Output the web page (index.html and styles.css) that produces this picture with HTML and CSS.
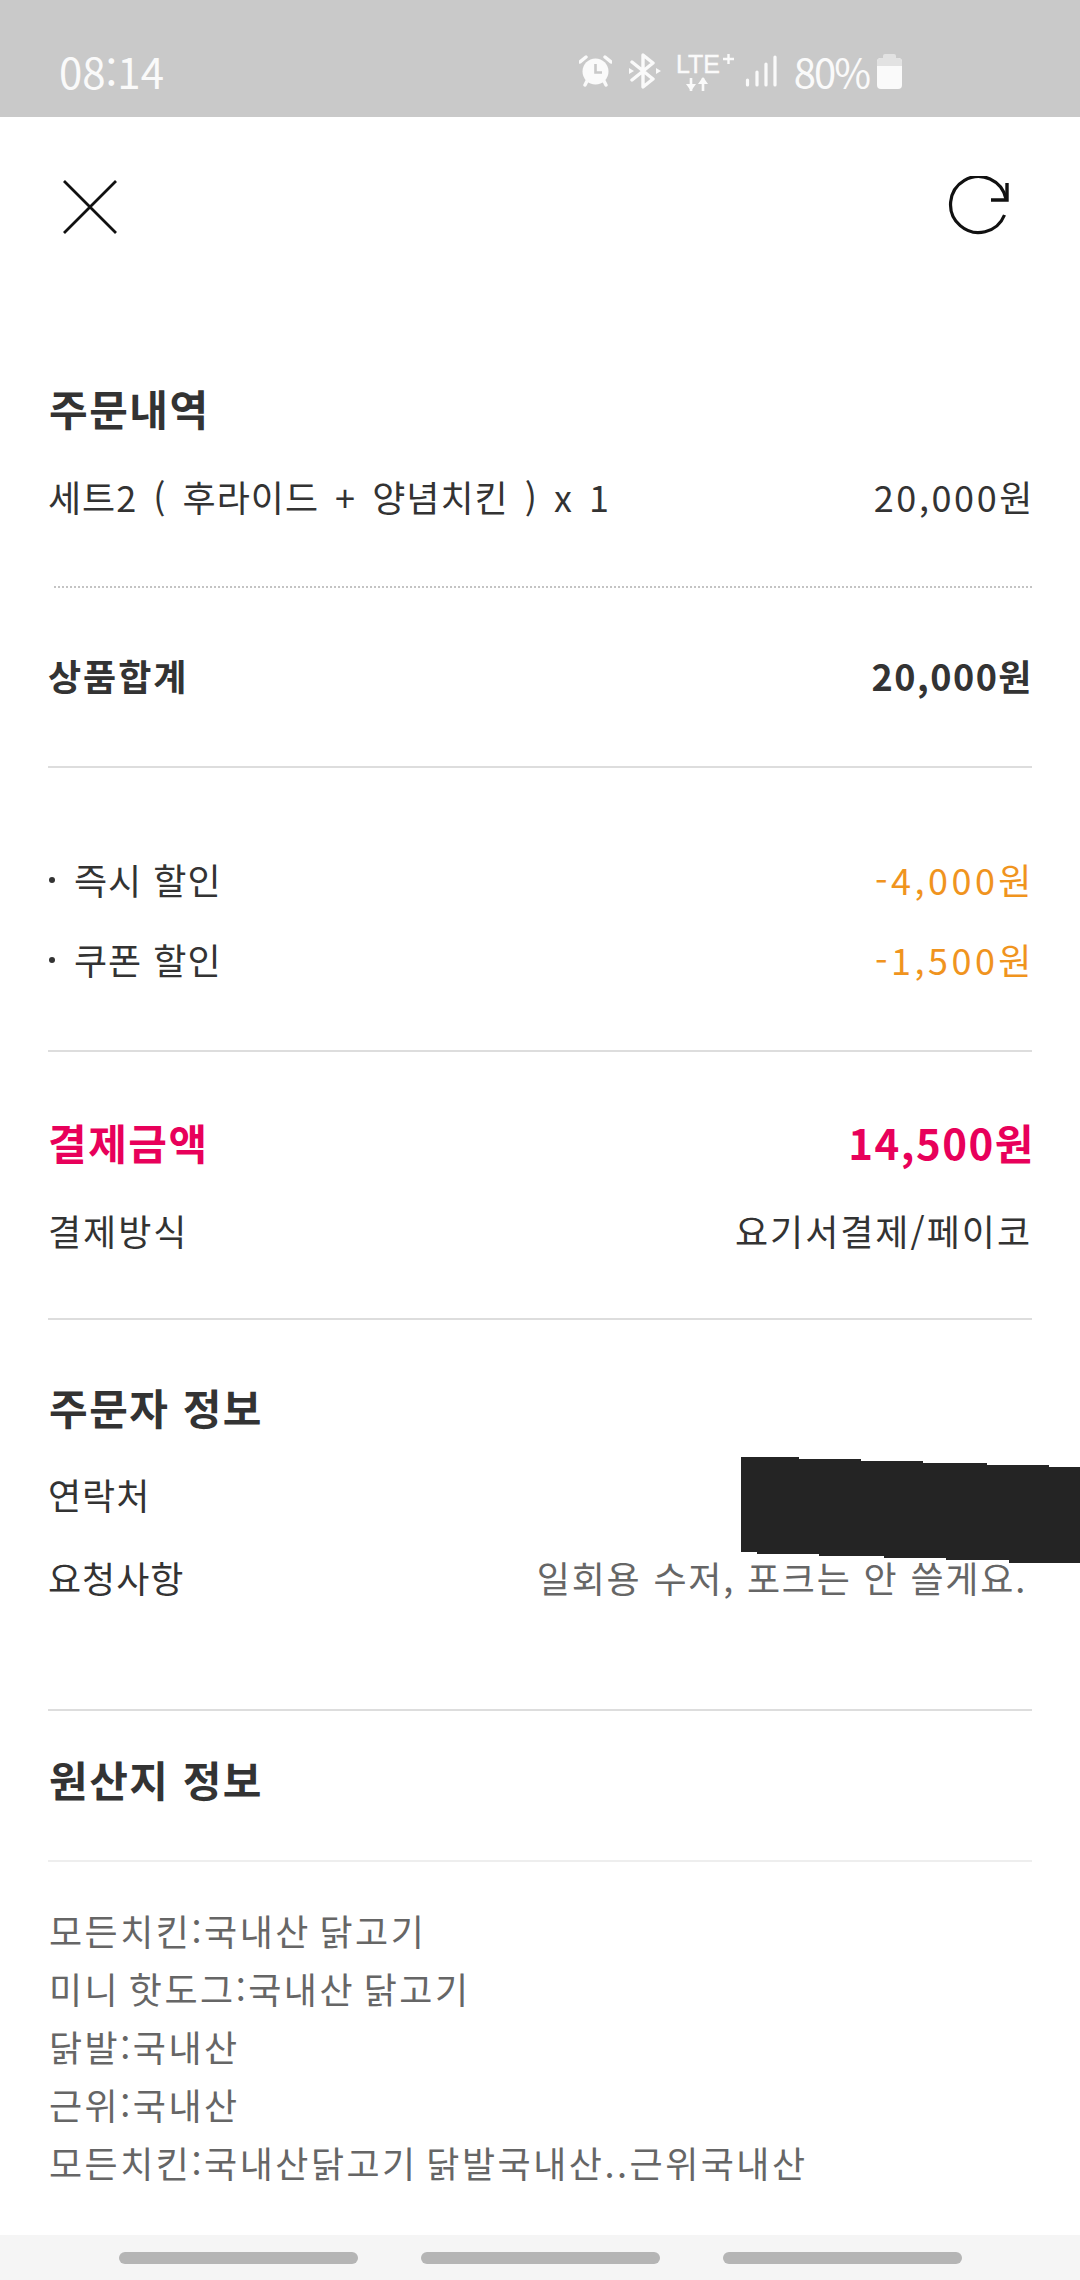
FILE: index.html
```html
<!DOCTYPE html>
<html lang="ko">
  <head>
    <meta charset="UTF-8" />
    <meta name="viewport" content="width=device-width, initial-scale=1.0" />
    <title>주문내역</title>
    <link rel="stylesheet" href="styles.css">
  </head>
  <body>
    <div class="status-bar">
      <span class="clock">08:14</span>
      <div class="status-icons">
        <svg width="33" height="32" viewBox="0 0 33 32">
          <path d="M1 7 L7 2 M32 7 L26 2" stroke="#fafafa" stroke-width="3.4" stroke-linecap="round" fill="none"/>
          <path d="M6 30 L8 26 M27 30 L25 26" stroke="#fafafa" stroke-width="3.4" stroke-linecap="round" fill="none"/>
          <circle cx="16.5" cy="16.5" r="13" fill="#fafafa"/>
          <path d="M16.5 9 V17.5 H23" stroke="#c9c9c9" stroke-width="2.6" fill="none"/>
        </svg>
        <svg class="ic-bt" width="32" height="36" viewBox="0 0 32 36">
          <path d="M3 9 L24 26 L14 34 V2 L24 10 L3 27" stroke="#fafafa" stroke-width="3.4" stroke-linejoin="round" stroke-linecap="round" fill="none"/>
          <path d="M0 15 L5 18 L0 21 Z M27 15 L32 18 L27 21 Z" fill="#fafafa"/>
        </svg>
        <svg class="ic-lte" width="58" height="40" viewBox="0 0 58 40">
          <text class="lte-text" x="0" y="22">LTE</text>
          <path d="M47 8 H58 M52.500 3 V13" stroke="#fafafa" stroke-width="2.400" fill="none"/>
          <path d="M15 27 V40 M27 40 V27" stroke="#fafafa" stroke-width="2.600" fill="none"/>
          <path d="M10 33 H20 L15 40 Z M22 33 H32 L27 26 Z" fill="#fafafa"/>
        </svg>
        <svg class="ic-signal" width="32" height="32" viewBox="0 0 32 32">
          <path d="M2.500 25 V30 M12 17 V30 M21 9 V30 M30 2 V30" stroke="#fafafa" stroke-width="3.200" stroke-linecap="round" fill="none"/>
        </svg>
        <span class="battery-level">80%</span>
        <div class="battery"><div class="battery-fill"></div></div>
      </div>
    </div>

    <div class="toolbar">
      <svg width="54" height="54" viewBox="0 0 54 54">
        <path d="M1 1 L53 53 M53 1 L1 53" stroke="#111" stroke-width="2.800" fill="none"/>
      </svg>
      <svg width="64" height="62" viewBox="0 0 64 62">
        <path d="M58.500 39 A28 28 0 1 1 60 23" stroke="#111" stroke-width="3.200" fill="none"/>
        <path d="M61 7 V24 H45" stroke="#111" stroke-width="3.400" fill="none"/>
      </svg>
    </div>

    <main class="content">
      <section class="order">
        <h2 class="heading">주문내역</h2>
        <div class="row item">
          <span class="item-name">세트2 ( 후라이드 + 양념치킨 ) x 1</span>
          <span class="price">20,000원</span>
        </div>
      </section>

      <section class="subtotal">
        <div class="row strong">
          <span>상품합계</span>
          <span class="price">20,000원</span>
        </div>
      </section>

      <section class="discounts">
        <div class="row">
          <span class="bullet">즉시 할인</span>
          <span class="price minus">-4,000원</span>
        </div>
        <div class="row">
          <span class="bullet">쿠폰 할인</span>
          <span class="price minus">-1,500원</span>
        </div>
      </section>

      <section class="payment">
        <div class="row total">
          <span>결제금액</span>
          <span>14,500원</span>
        </div>
        <div class="row method">
          <span>결제방식</span>
          <span>요기서결제/페이코</span>
        </div>
      </section>

      <section class="buyer">
        <h2 class="heading">주문자 정보</h2>
        <div class="row contact">
          <span>연락처</span>
          <div class="masked"></div>
        </div>
        <div class="row request">
          <span>요청사항</span>
          <span class="muted">일회용 수저, 포크는 안 쓸게요.</span>
        </div>
      </section>

      <section class="origin">
        <h2 class="heading">원산지 정보</h2>
        <ul class="origin-list">
          <li>모든치킨:국내산 닭고기</li>
          <li>미니 핫도그:국내산 닭고기</li>
          <li>닭발:국내산</li>
          <li>근위:국내산</li>
          <li>모든치킨:국내산닭고기 닭발국내산..근위국내산</li>
        </ul>
      </section>
    </main>

    <div class="nav-bar">
      <div class="pill"></div>
      <div class="pill"></div>
      <div class="pill"></div>
    </div>
  </body>
</html>
```

FILE: styles.css
```css
* {
  box-sizing: border-box;
  margin: 0;
  padding: 0;
}

body {
  width: 1080px;
  height: 2280px;
  display: flex;
  flex-direction: column;
  background-color: #fff;
  color: #333;
  font-family: "Noto Sans CJK KR", "Noto Sans", sans-serif;
  overflow: hidden;
}

.status-bar {
  height: 117px;
  flex-shrink: 0;
  display: flex;
  align-items: center;
  justify-content: space-between;
  padding: 25px 178px 0 59px;
  background-color: #c9c9c9;
  color: #fafafa;
}

.clock {
  font-size: 42px;
  line-height: 44px;
}

.status-icons {
  display: flex;
  align-items: center;
}

.ic-bt {
  margin-left: 17px;
}

.ic-lte {
  margin-left: 15px;
}

.lte-text {
  font-family: "Liberation Sans", sans-serif;
  font-size: 25px;
  fill: #fafafa;
  stroke: #fafafa;
  stroke-width: 0.4px;
}

.ic-signal {
  margin-left: 11px;
}

.battery-level {
  font-size: 40px;
  line-height: 44px;
  margin-left: 17px;
  letter-spacing: -2px;
}

/* body plus the narrower cap on top */
.battery {
  width: 25px;
  height: 31px;
  margin: 4px 0 0 8px;
  position: relative;
  background-color: #fafafa;
  border-radius: 4px;
}

.battery::before {
  content: "";
  position: absolute;
  left: 6px;
  top: -4px;
  width: 13px;
  height: 4px;
  border-radius: 2px 2px 0 0;
  background-color: #e2e2e2;
}

.battery-fill {
  height: 8px;
  border-radius: 4px 4px 0 0;
  background-color: #e2e2e2;
}

.toolbar {
  height: 180px;
  flex-shrink: 0;
  display: flex;
  align-items: center;
  justify-content: space-between;
  padding: 0 70px 0 63px;
}

.content {
  flex: 1;
  padding: 0 48px;
}

section {
  border-bottom: 2px solid #ddd;
}

.heading {
  height: 60px;
  padding-bottom: 6px;
  padding-left: 1px;
  font-size: 42px;
  font-weight: 700;
  line-height: 54px;
  letter-spacing: 1.500px;
}

.row {
  height: 50px;
  padding-bottom: 6px;
  display: flex;
  align-items: center;
  justify-content: space-between;
  font-size: 36px;
  line-height: 44px;
  letter-spacing: 1px;
  white-space: nowrap;
}

.order {
  margin-top: 84px;
  padding-bottom: 64px;
  position: relative;
  border-bottom: none;
}

.order::after {
  content: "";
  position: absolute;
  left: 6px;
  right: 0;
  bottom: 0;
  border-bottom: 2px dotted #c4c4c4;
}

.item {
  margin-top: 33px;
}

.item-name {
  word-spacing: 5px;
}

.price {
  letter-spacing: 2.600px;
  margin-right: -3px;
}

.subtotal {
  padding: 65px 0 63px;
}

.strong {
  font-weight: 700;
  letter-spacing: 2px;
}

.strong .price {
  letter-spacing: 1.500px;
  margin-right: -1px;
}

.discounts {
  padding: 89px 0 63px;
}

.discounts .row + .row {
  margin-top: 30px;
}

.bullet {
  position: relative;
  padding-left: 26px;
}

.bullet::before {
  content: "";
  position: absolute;
  left: 1px;
  top: 20px;
  width: 6px;
  height: 6px;
  border-radius: 50%;
  background-color: #333;
}

.minus {
  color: #f0941e;
  letter-spacing: 3.500px;
}

.payment {
  padding: 68px 0 60px;
}

.total {
  color: #e8005a;
  font-size: 42px;
  font-weight: 700;
  letter-spacing: 1.500px;
}

.total span:last-child {
  margin-right: -3px;
}

.method {
  margin-top: 38px;
  letter-spacing: 2px;
}

.buyer {
  padding: 60px 0 104px;
}

.contact {
  margin-top: 32px;
  position: relative;
}

/* phone number blacked out, runs off the right edge */
.masked {
  position: absolute;
  top: -15px;
  right: -48px;
  width: 339px;
  height: 106px;
  background-color: #242424;
  clip-path: polygon(
    0 0, 58px 0, 58px 2px, 120px 2px, 120px 4px, 182px 4px, 182px 6px,
    246px 6px, 246px 8px, 308px 8px, 308px 10px, 100% 10px,
    100% 100%, 268px 100%, 268px 103px, 205px 103px, 205px 101px,
    143px 101px, 143px 99px, 78px 99px, 78px 97px, 16px 97px, 16px 95px, 0 95px
  );
}

.request {
  margin-top: 33px;
}

.muted {
  color: #666;
  letter-spacing: 1.800px;
  margin-right: 5px;
}

.origin {
  padding-top: 41px;
  border-bottom: none;
}

.origin-list {
  list-style: none;
  margin-top: 48px;
  padding: 39px 0 0 1px;
  border-top: 2px solid #eee;
  color: #666;
  font-size: 36px;
  line-height: 58px;
  letter-spacing: 2.500px;
  word-spacing: -4px;
  white-space: nowrap;
}

.nav-bar {
  height: 45px;
  flex-shrink: 0;
  display: flex;
  justify-content: center;
  gap: 63px;
  padding-top: 17px;
  background-color: #f5f5f5;
}

.pill {
  width: 239px;
  height: 12px;
  border-radius: 6px;
  background-color: #b5b5b5;
}
```
